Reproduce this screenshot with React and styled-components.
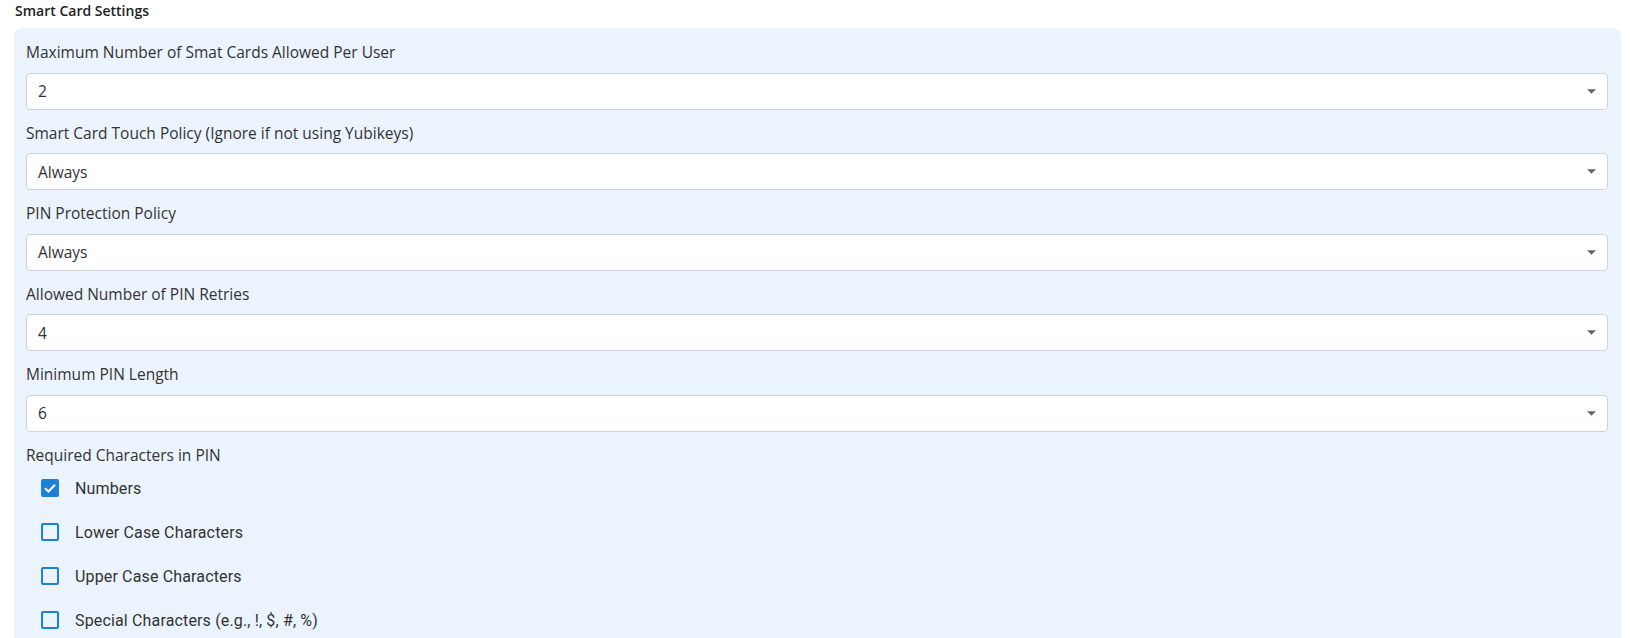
import React from 'react'
import styled, { createGlobalStyle } from 'styled-components'

const GlobalStyle = createGlobalStyle`
  body {
    margin: 0;
    background: #fff;
    font-family: "Open Sans", "Noto Sans", sans-serif;
    color: #333;
  }
`;

const fields = [
  { label: 'Maximum Number of Smat Cards Allowed Per User', value: '2' },
  { label: 'Smart Card Touch Policy (Ignore if not using Yubikeys)', value: 'Always' },
  { label: 'PIN Protection Policy', value: 'Always' },
  { label: 'Allowed Number of PIN Retries', value: '4' },
  { label: 'Minimum PIN Length', value: '6' },
];

const charOptions = [
  { label: 'Numbers', checked: true },
  { label: 'Lower Case Characters', checked: false },
  { label: 'Upper Case Characters', checked: false },
  { label: 'Special Characters (e.g., !, $, #, %)', checked: false },
];

export default function App() {
  return (
    <>
      <GlobalStyle />
      <Page>
        <Title>Smart Card Settings</Title>
        <Card>
          {fields.map((f) => (
            <Group key={f.label}>
              <Label>{f.label}</Label>
              <Select>
                <span>{f.value}</span>
                <Caret viewBox="0 0 10 5">
                  <path d="M0 0 L10 0 L5 5 Z" />
                </Caret>
              </Select>
            </Group>
          ))}
          <Label>Required Characters in PIN</Label>
          <CheckList>
            {charOptions.map((o) => (
              <CheckRow key={o.label}>
                <Box $checked={o.checked}>
                  {o.checked && (
                    <svg viewBox="0 0 18 18" width="18" height="18">
                      <path d="M4 9.2 L7.4 12.5 L14 5.8" fill="none" stroke="#fff" strokeWidth="2" />
                    </svg>
                  )}
                </Box>
                <CheckText>{o.label}</CheckText>
              </CheckRow>
            ))}
          </CheckList>
        </Card>
      </Page>
    </>
  )
}

const Page = styled.div`
  padding: 1px 9px 0 14px;
`;

const Title = styled.h4`
  margin: 0 0 7px 1px;
  font-size: 14px;
  line-height: 20px;
  font-weight: 600;
  color: #222;
`;

const Card = styled.section`
  background: #ebf4fc;
  border-radius: 8px;
  padding: 13px 13px 20px 12px;
`;

const Group = styled.div`
  margin-bottom: 12px;
`;

const Label = styled.div`
  font-size: 15.5px;
  line-height: 22.5px;
  color: #333;
  margin-bottom: 9px;
`;

const Select = styled.div`
  height: 37px;
  box-sizing: border-box;
  background: #fff;
  border: 1px solid #ced4da;
  border-radius: 4px;
  padding: 0 11px;
  display: flex;
  align-items: center;
  justify-content: space-between;
  font-size: 15.5px;
  color: #333;
`;

const Caret = styled.svg`
  width: 9px;
  height: 5px;
  fill: #666;
`;

const CheckList = styled.div`
  display: flex;
  flex-direction: column;
  margin-top: -9px;
`;

const CheckRow = styled.label`
  height: 44px;
  display: flex;
  align-items: center;
  padding-left: 15px;
  gap: 16px;
`;

const Box = styled.span`
  width: 18px;
  height: 18px;
  box-sizing: border-box;
  border-radius: 2px;
  border: 2px solid #1b80d8;
  background: ${(p) => (p.$checked ? '#1b80d8' : 'transparent')};
  display: flex;
  align-items: center;
  justify-content: center;
  svg {
    flex: none;
  }
`;

const CheckText = styled.span`
  font-family: Roboto, "Liberation Sans", sans-serif;
  font-size: 16px;
  letter-spacing: 0.15px;
  color: #333;
`;
